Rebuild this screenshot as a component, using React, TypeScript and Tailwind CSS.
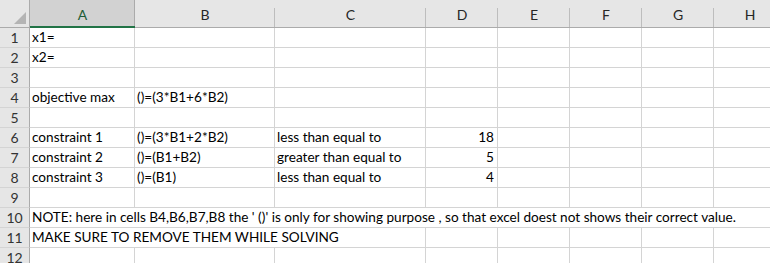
import React from "react";

const cols = ["A", "B", "C", "D", "E", "F", "G", "H"];

type Cell = { t?: string; right?: boolean };

const rows: (Cell[] | "note10" | "note11")[] = [
  [{ t: "x1=" }],
  [{ t: "x2=" }],
  [],
  [{ t: "objective max" }, { t: "()=(3*B1+6*B2)" }],
  [],
  [{ t: "constraint 1" }, { t: "()=(3*B1+2*B2)" }, { t: "less than equal to" }, { t: "18", right: true }],
  [{ t: "constraint 2" }, { t: "()=(B1+B2)" }, { t: "greater than equal to" }, { t: "5", right: true }],
  [{ t: "constraint 3" }, { t: "()=(B1)" }, { t: "less than equal to" }, { t: "4", right: true }],
  [],
  "note10",
  "note11",
  [],
];

const cellBase =
  "h-[20px] border-r border-b border-[#d4d4d4] bg-white text-black whitespace-nowrap leading-[19px] px-[2px] overflow-visible text-[13.6px]";

export default function App() {
  return (
    <div
      className="w-[770px] h-[263px] overflow-hidden bg-white text-[14px]"
      style={{ fontFamily: "Lato, 'Liberation Sans', sans-serif" }}
    >
      <div className="grid grid-cols-[30px_105px_140px_151px_72px_72px_72px_72px_72px] w-[786px]">
        <div className="h-[28px] bg-[#e6e6e6] border-r border-b border-[#ababab] flex items-end justify-end pr-[3px] pb-[3px]">
          <svg width="12" height="12" viewBox="0 0 12 12">
            <polygon points="12,0 12,12 0,12" fill="#b4b4b4" />
          </svg>
        </div>
        {cols.map((c) => (
          <div
            key={c}
            className={
              c === "A"
                ? "relative h-[28px] bg-[#d2d2d2] border-b-2 border-[#217346] flex items-center justify-center text-[#1e5c38] pt-[2px] after:content-[''] after:absolute after:right-0 after:top-0 after:bottom-0 after:w-px after:bg-[#ababab]"
                : "relative h-[28px] bg-[#e6e6e6] border-b border-[#ababab] flex items-center justify-center text-[#262626] pt-[2px] after:content-[''] after:absolute after:right-0 after:top-[8px] after:bottom-0 after:w-px after:bg-[#bdbdbd]"
            }
          >
            {c}
          </div>
        ))}
        {rows.map((r, i) => {
          const n = i + 1;
          const rh = (
            <div
              key={`rh${n}`}
              className="h-[20px] bg-[#e6e6e6] border-r border-b border-r-[#ababab] border-b-[#d4d4d4] flex items-center justify-center text-[#333] leading-[19px]"
            >
              {n}
            </div>
          );
          if (r === "note10") {
            return (
              <React.Fragment key={n}>
                {rh}
                <div className={`${cellBase} col-span-8`}>
                  NOTE: here in cells B4,B6,B7,B8 the ' ()' is only for showing purpose , so that excel doest not shows their correct value.
                </div>
              </React.Fragment>
            );
          }
          if (r === "note11") {
            return (
              <React.Fragment key={n}>
                {rh}
                <div className={`${cellBase} col-span-3`}>MAKE SURE TO REMOVE THEM WHILE SOLVING</div>
                {[0, 1, 2, 3, 4].map((k) => (
                  <div key={k} className={cellBase} />
                ))}
              </React.Fragment>
            );
          }
          return (
            <React.Fragment key={n}>
              {rh}
              {cols.map((c, j) => {
                const cell = r[j];
                return (
                  <div key={c} className={`${cellBase} ${cell?.right ? "text-right pr-[3px]" : ""}`}>
                    {cell?.t ?? ""}
                  </div>
                );
              })}
            </React.Fragment>
          );
        })}
      </div>
    </div>
  );
}
